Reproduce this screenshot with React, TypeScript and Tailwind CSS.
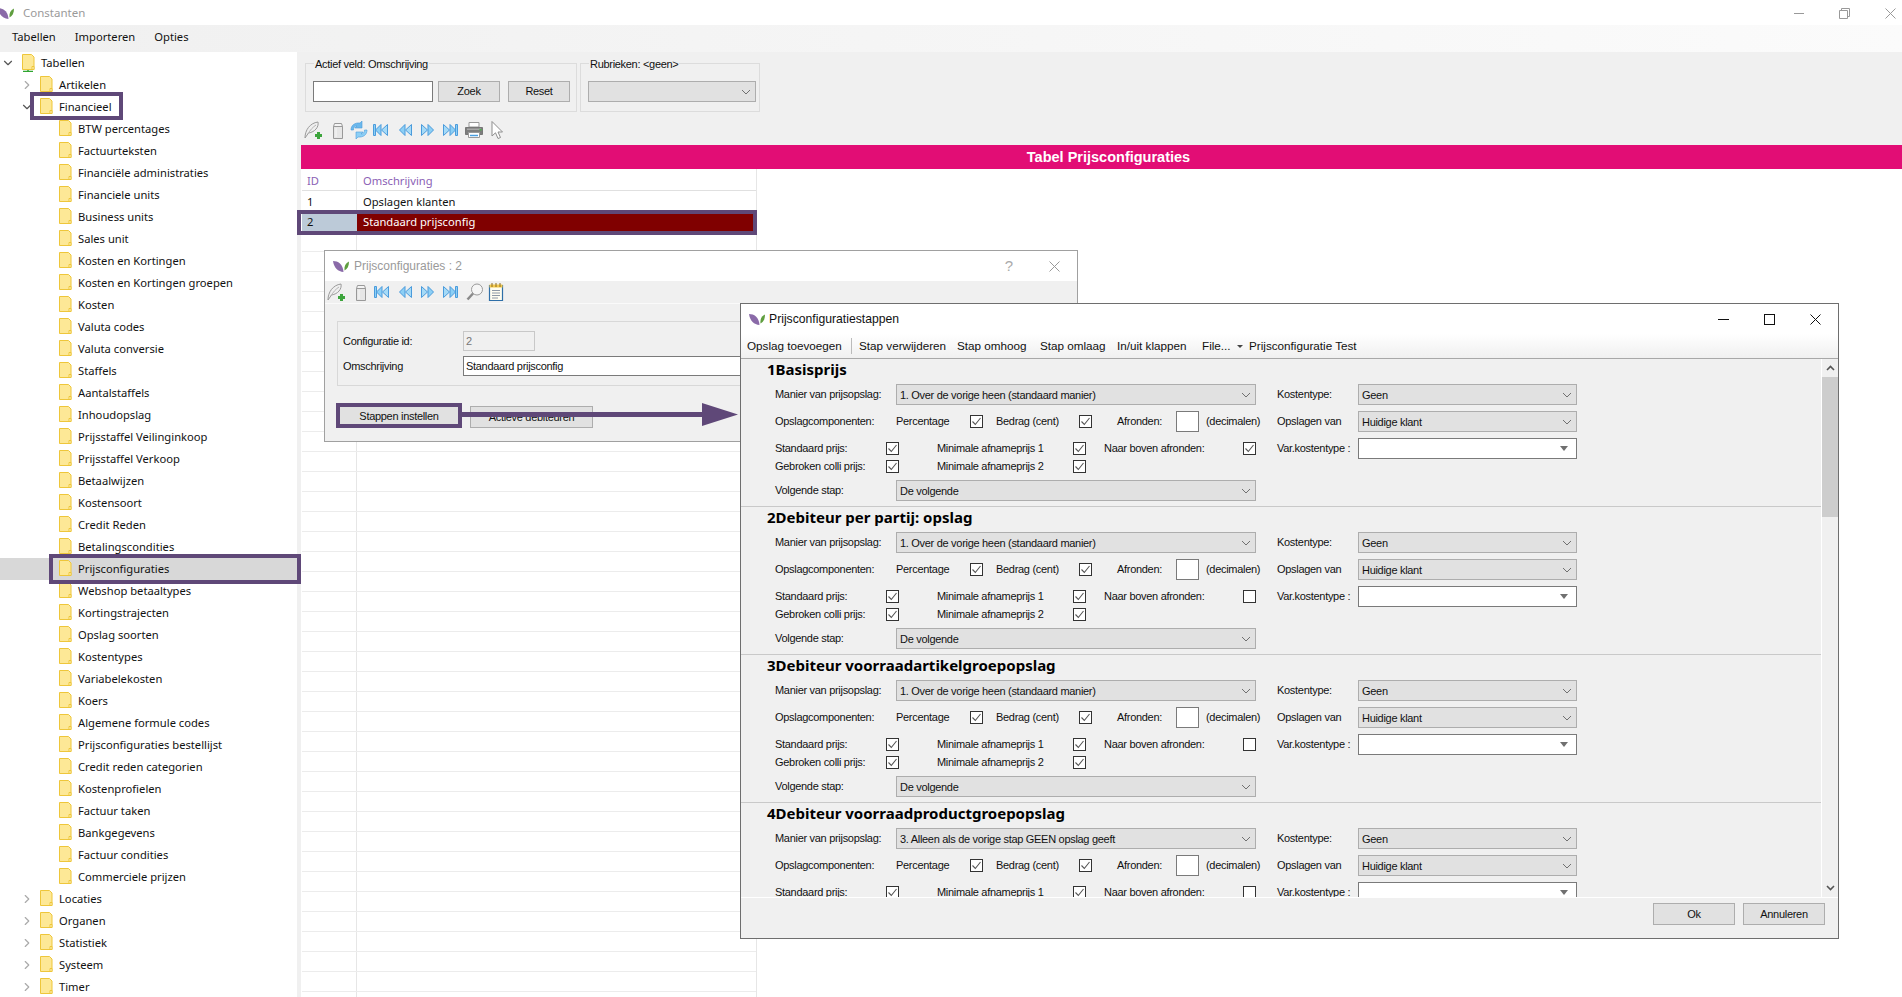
import { ChevronDown, ChevronRight } from "lucide-react";

const treeChildren = [
    "BTW percentages", "Factuurteksten", "Financiële administraties", "Financiele units", "Business units",
    "Sales unit", "Kosten en Kortingen", "Kosten en Kortingen groepen", "Kosten", "Valuta codes",
    "Valuta conversie", "Staffels", "Aantalstaffels", "Inhoudopslag", "Prijsstaffel Veilinginkoop",
    "Prijsstaffel Verkoop", "Betaalwijzen", "Kostensoort", "Credit Reden", "Betalingscondities",
    "Prijsconfiguraties", "Webshop betaaltypes", "Kortingstrajecten", "Opslag soorten", "Kostentypes",
    "Variabelekosten", "Koers", "Algemene formule codes", "Prijsconfiguraties bestellijst",
    "Credit reden categorien", "Kostenprofielen", "Factuur taken", "Bankgegevens", "Factuur condities",
    "Commerciele prijzen",
];

const steps = [
    { title: "1Basisprijs", mode: "1. Over de vorige heen (standaard manier)", up: true },
    { title: "2Debiteur per partij: opslag", mode: "1. Over de vorige heen (standaard manier)", up: false },
    { title: "3Debiteur voorraadartikelgroepopslag", mode: "1. Over de vorige heen (standaard manier)", up: false },
    { title: "4Debiteur voorraadproductgroepopslag", mode: "3. Alleen als de vorige stap GEEN opslag geeft", up: false },
];

const Logo = () => (
    <svg width="16" height="11" viewBox="0 0 16 11">
        <path d="M0 0C5 0 10 3 10.500 11C5 10.500 1 7 0 0Z" fill="#8a6aa8" />
        <path d="M11.500 9.500C11 5 12.500 2 16 0.500C16 5 14.500 8 11.500 9.500Z" fill="#5f9e3f" />
    </svg>
);

const Folder = ({ root }: { root?: boolean }) => (
    <svg width="13" height="18" viewBox="0 0 13 18" className="shrink-0">
        <path d="M0.500 0.500H9.500L12 3V15.500H0.500Z" fill="#fde896" stroke="#eec63a" />
        <path d="M10 12.500H12V15.500H10Z" fill="#fff4c0" stroke="#eec63a" />
        {root && <path d="M6 16V17M1 17.500H11" stroke="#2fa52f" strokeWidth="1.500" />}
    </svg>
);

const FeatherIcon = () => (
    <svg width="20" height="20" viewBox="0 0 20 20">
        <path d="M2 18C2 10 7 3 15 2C16 7 12 12 5.500 13L2 18Z" fill="#efefef" stroke="#9a9a9a" />
        <path d="M5 14C7 10 10 7 13 5" stroke="#b5b5b5" fill="none" />
        <path d="M12 15.500H19M15.500 12V19" stroke="#3da53d" strokeWidth="3" />
    </svg>
);

const TrashIcon = () => (
    <svg width="20" height="20" viewBox="0 0 20 20">
        <path d="M5.500 6.500H14.500V18.500H5.500Z" fill="#e6e6e6" stroke="#999" />
        <path d="M6.500 3.500H13.500L14.500 6.500H5.500Z" fill="#f4f4f4" stroke="#999" />
        <path d="M8 8V17" stroke="#f7f7f7" />
    </svg>
);

const RefreshIcon = () => (
    <svg width="20" height="20" viewBox="0 0 20 20">
        <path d="M2 10C2 5 6 2.500 11 3L13 1V8H6L8 6C5.500 6 4.500 8 4.500 10Z" fill="#6bb8ec" stroke="#4a9bdc" strokeWidth="0.600" />
        <path d="M18 10C18 15 14 17.500 9 17L7 19V12H14L12 14C14.500 14 15.500 12 15.500 10Z" fill="#8ccff5" stroke="#4a9bdc" strokeWidth="0.600" />
    </svg>
);

const NavIcon = ({ dir, bar }: { dir: "l" | "r"; bar?: boolean }) => (
    <svg width="20" height="20" viewBox="0 0 20 20" className={dir === "r" ? "-scale-x-100" : ""}>
        {bar && <path d="M2.500 4.500H4.500V15.500H2.500Z" fill="#8ccff5" stroke="#4a9bdc" />}
        <path d="M10 4.500V15.500L4.500 10Z" fill="#8ccff5" stroke="#4a9bdc" strokeLinejoin="round" />
        <path d="M16.500 4.500V15.500L10.500 10Z" fill="#a5daf7" stroke="#4a9bdc" strokeLinejoin="round" />
    </svg>
);

const PrinterIcon = () => (
    <svg width="20" height="20" viewBox="0 0 20 20">
        <path d="M5 2.500H15V7H5Z" fill="#fff" stroke="#999" />
        <path d="M1.500 7.500H18.500V14.500H1.500Z" fill="#7d7d7d" stroke="#777" />
        <path d="M3 8.500H17V10H3Z" fill="#a8a8a8" />
        <path d="M4.500 12.500H15.500V17.500H4.500Z" fill="#fff" stroke="#999" />
        <path d="M6 15.500H14" stroke="#4a9fe0" strokeWidth="1.500" />
        <path d="M15.500 9H17.500V10.500H15.500Z" fill="#49b649" />
    </svg>
);

const CursorIcon = () => (
    <svg width="20" height="20" viewBox="0 0 20 20">
        <path d="M5 1.500V16L8.500 12.800L11 18.500L13.500 17.500L11 12H15.500Z" fill="#fff" stroke="#8d8d8d" />
    </svg>
);

const LensIcon = () => (
    <svg width="20" height="20" viewBox="0 0 20 20">
        <circle cx="12" cy="7.500" r="5.500" fill="#f6f6f6" stroke="#9a9a9a" />
        <path d="M8 11.500L2.500 17.500" stroke="#8a8a8a" strokeWidth="2.500" />
    </svg>
);

const NoteIcon = () => (
    <svg width="20" height="20" viewBox="0 0 20 20">
        <path d="M3.500 3.500H16.500V18.500H3.500Z" fill="#fffdf0" stroke="#2f6fa8" strokeWidth="1.200" />
        <path d="M3.500 2.500H16.500V5.500H3.500Z" fill="#f3c94c" />
        <path d="M6 1V5M10 1V5M14 1V5" stroke="#8a6a20" />
        <path d="M6 8.500H14M6 11H14M6 13.500H14M6 16H12" stroke="#8d98a5" />
    </svg>
);

const SmallChevron = () => (
    <svg width="10" height="6" viewBox="0 0 10 6" className="shrink-0">
        <path d="M1 1L5 5L9 1" fill="none" stroke="#707070" />
    </svg>
);

const WinClose = ({ color = "#111" }: { color?: string }) => (
    <svg width="11" height="11" viewBox="0 0 11 11">
        <path d="M0.500 0.500L10.500 10.500M10.500 0.500L0.500 10.500" stroke={color} />
    </svg>
);

const Check = ({ on = true }: { on?: boolean }) => (
    <span className="flex h-[13px] w-[13px] shrink-0 items-center justify-center border border-[#333] bg-white">
        {on && (
            <svg width="11" height="11" viewBox="0 0 11 11">
                <path d="M1.500 5.500L4.300 8.500L9.500 2" fill="none" stroke="#555" strokeWidth="1.100" />
            </svg>
        )}
    </span>
);

const Select = ({ text, className }: { text: string; className: string }) => (
    <div className={`flex h-[21px] shrink-0 items-center justify-between border border-[#adadad] bg-[#e1e1e1] pl-[3px] pr-[4px] ${className}`}>
        <span className="pt-px">{text}</span>
        <SmallChevron />
    </div>
);

const Button = ({ text, className }: { text: string; className: string }) => (
    <div className={`flex items-center justify-center border border-[#adadad] bg-[#e1e1e1] text-[#111] ${className}`}>{text}</div>
);

const Step = ({ title, mode, up }: { title: string; mode: string; up: boolean }) => (
    <section className="h-[148px] shrink-0 whitespace-nowrap border-b border-[#c9c9c9] pl-[34px] text-[#111]">
        <h2 className="-ml-[8px] flex h-[21px] items-center font-['Noto_Sans',sans-serif] text-[15px] font-bold tracking-normal text-black">{title}</h2>
        <div className="mt-[4px] flex h-[21px] items-center">
            <span className="w-[121px] shrink-0">Manier van prijsopslag:</span>
            <Select text={mode} className="w-[360px]" />
            <span className="ml-[21px] w-[81px] shrink-0">Kostentype:</span>
            <Select text="Geen" className="w-[219px]" />
        </div>
        <div className="mt-[6px] flex h-[21px] items-center">
            <span className="w-[121px] shrink-0">Opslagcomponenten:</span>
            <span className="w-[74px] shrink-0">Percentage</span>
            <Check />
            <span className="ml-[13px] w-[83px] shrink-0">Bedrag (cent)</span>
            <Check />
            <span className="ml-[25px] w-[59px] shrink-0">Afronden:</span>
            <span className="h-[21px] w-[23px] shrink-0 border border-[#7a7a7a] bg-white" />
            <span className="ml-[7px] w-[71px] shrink-0">(decimalen)</span>
            <span className="w-[81px] shrink-0">Opslagen van</span>
            <Select text="Huidige klant" className="w-[219px]" />
        </div>
        <div className="mt-[7px] flex h-[18px] items-center">
            <span className="w-[111px] shrink-0">Standaard prijs:</span>
            <Check />
            <span className="ml-[38px] w-[136px] shrink-0">Minimale afnameprijs 1</span>
            <Check />
            <span className="ml-[18px] w-[139px] shrink-0">Naar boven afronden:</span>
            <Check on={up} />
            <span className="ml-[21px] w-[81px] shrink-0">Var.kostentype :</span>
            <div className="flex h-[21px] w-[219px] shrink-0 items-center justify-end border border-[#7a7a7a] bg-white pr-[8px]">
                <svg width="8" height="5" viewBox="0 0 8 5">
                    <path d="M0 0H8L4 5Z" fill="#707070" />
                </svg>
            </div>
        </div>
        <div className="flex h-[18px] items-center">
            <span className="w-[111px] shrink-0">Gebroken colli prijs:</span>
            <Check />
            <span className="ml-[38px] w-[136px] shrink-0">Minimale afnameprijs 2</span>
            <Check />
        </div>
        <div className="mt-[5px] flex h-[21px] items-center">
            <span className="w-[121px] shrink-0">Volgende stap:</span>
            <Select text="De volgende" className="w-[360px]" />
        </div>
    </section>
);

const TreeRow = ({ label, depth, open, selected, root }: { label: string; depth: 0 | 1 | 2; open?: boolean; selected?: boolean; root?: boolean }) => (
    <div className={`flex h-[22px] items-center ${selected ? "bg-[#d8d8d8]" : ""}`}>
        {depth === 0 && <ChevronDown size={14} strokeWidth={2} className="ml-[1px] mr-[7px] text-[#555]" />}
        {depth === 1 && (open ? (
            <ChevronDown size={14} strokeWidth={2} className="ml-[20px] mr-[6px] text-[#555]" />
        ) : (
            <ChevronRight size={14} strokeWidth={2} className="ml-[20px] mr-[6px] text-[#aaa]" />
        ))}
        {depth === 2 && <span className="w-[59px] shrink-0" />}
        <Folder root={root} />
        <span className="ml-[6px]">{label}</span>
    </div>
);

const App = () => {
    return (
        <div className="relative flex h-screen w-screen flex-col overflow-hidden bg-white font-['Noto_Sans',sans-serif] text-[11.2px] text-[#111]">
            <header className="flex h-[25px] shrink-0 items-center overflow-hidden pt-px">
                <div className="-ml-[2px]">
                    <Logo />
                </div>
                <span className="ml-[9px] text-[11.5px] text-[#9a9a9a]">Constanten</span>
                <div className="ml-auto flex items-center gap-[35px] pr-[6px] text-[#888]">
                    <span className="h-px w-[10px] bg-[#999]" />
                    <svg width="11" height="11" viewBox="0 0 11 11">
                        <path d="M0.500 2.500H8.500V10.500H0.500ZM2.500 2.500V0.500H10.500V8.500H8.500" fill="none" stroke="#999" />
                    </svg>
                    <WinClose color="#999" />
                </div>
            </header>
            <nav className="flex h-[27px] shrink-0 items-center gap-[19px] bg-gradient-to-r from-[#f0f0f0] to-[#fbfbfb] pb-[3px] pl-[12px]">
                <span>Tabellen</span>
                <span>Importeren</span>
                <span>Opties</span>
            </nav>
            <div className="flex min-h-0 flex-1">
                <aside className="w-[297px] shrink-0 overflow-hidden">
                    <TreeRow label="Tabellen" depth={0} root />
                    <TreeRow label="Artikelen" depth={1} />
                    <TreeRow label="Financieel" depth={1} open />
                    {treeChildren.map((c) => (
                        <TreeRow key={c} label={c} depth={2} selected={c === "Prijsconfiguraties"} />
                    ))}
                    {["Locaties", "Organen", "Statistiek", "Systeem", "Timer"].map((c) => (
                        <TreeRow key={c} label={c} depth={1} />
                    ))}
                </aside>
                <main className="flex min-w-0 flex-1 flex-col bg-[#f0f0f0] pl-[4px]">
                    <div className="ml-[4px] mt-[11px] flex gap-[3px] font-['Liberation_Sans',Arial,sans-serif] text-[11px] tracking-[-0.3px]">
                        <div className="relative flex h-[49px] w-[272px] gap-[5px] border border-[#dcdcdc] pl-[7px] pt-[17px]">
                            <span className="absolute -top-[8px] left-[8px] bg-[#f0f0f0] px-px">Actief veld: Omschrijving</span>
                            <span className="h-[21px] w-[120px] border border-[#7a7a7a] bg-white" />
                            <Button text="Zoek" className="h-[21px] w-[62px]" />
                            <Button text="Reset" className="ml-[3px] h-[21px] w-[62px]" />
                        </div>
                        <div className="relative flex h-[49px] w-[180px] border border-[#dcdcdc] pl-[7px] pt-[17px]">
                            <span className="absolute -top-[8px] left-[8px] bg-[#f0f0f0] px-px">Rubrieken: &lt;geen&gt;</span>
                            <Select text="" className="w-[168px]" />
                        </div>
                    </div>
                    <div className="flex h-[33px] items-center pl-[2px] pt-[2px]">
                        <span className="flex w-[20px] justify-center"><FeatherIcon /></span>
                        <span className="ml-[5px] flex w-[20px] justify-center"><TrashIcon /></span>
                        <span className="ml-px flex w-[20px] justify-center"><RefreshIcon /></span>
                        <span className="ml-[2px] flex w-[20px] justify-center"><NavIcon dir="l" bar /></span>
                        <span className="ml-[4px] flex w-[20px] justify-center"><NavIcon dir="l" /></span>
                        <span className="ml-[3px] flex w-[20px] justify-center"><NavIcon dir="r" /></span>
                        <span className="ml-[2px] flex w-[20px] justify-center"><NavIcon dir="r" bar /></span>
                        <span className="ml-[4px] flex w-[20px] justify-center"><PrinterIcon /></span>
                        <span className="ml-[3px] flex w-[20px] justify-center"><CursorIcon /></span>
                    </div>
                    <div className="flex h-[24px] shrink-0 items-center justify-center bg-[#e20d75] pl-[14px] pt-px font-['Liberation_Sans',Arial,sans-serif] text-[14.500px] font-bold text-white">
                        Tabel Prijsconfiguraties
                    </div>
                    <div className="min-h-0 flex-1 overflow-hidden bg-white pl-px">
                        <div className="w-[455px] border-r border-[#e6e6e6]">
                            <div className="flex h-[22px] border-b border-[#e0e0e0] text-[#8b5fb5]">
                                <span className="h-full w-[55px] border-r border-[#e6e6e6] pl-[5px] leading-[23px]">ID</span>
                                <span className="pl-[6px] leading-[23px]">Omschrijving</span>
                            </div>
                            <div className="flex h-[21px] border-b border-[#ececec]">
                                <span className="h-full w-[55px] border-r border-[#e6e6e6] pl-[5px] leading-[22px]">1</span>
                                <span className="pl-[6px] leading-[22px]">Opslagen klanten</span>
                            </div>
                            <div className="flex h-[20px] items-center">
                                <span className="h-full w-[55px] bg-[#bccad8] pl-[5px] leading-[20px]">2</span>
                                <span className="h-full flex-1 bg-[#800000] pl-[6px] leading-[20px] text-white">Standaard prijsconfig</span>
                            </div>
                            {Array.from({ length: 40 }).map((_, i) => (
                                <div key={i} className="flex h-[20px] border-b border-[#ececec]">
                                    <span className="h-full w-[55px] border-r border-[#e6e6e6]" />
                                </div>
                            ))}
                        </div>
                    </div>
                </main>
            </div>

            {/* venster 1 */}
            <div className="absolute left-[324px] top-[250px] flex h-[192px] w-[754px] flex-col border border-[#a0a0a0] bg-[#f0f0f0] font-['Liberation_Sans',Arial,sans-serif] text-[11px] tracking-[-0.3px]">
                <div className="flex h-[30px] shrink-0 items-center bg-white pl-[8px] text-[12px] tracking-normal">
                    <Logo />
                    <span className="ml-[5px] text-[#9a9a9a]">Prijsconfiguraties : 2</span>
                    <span className="ml-auto mr-[36px] text-[15px] text-[#aaa]">?</span>
                    <span className="mr-[17px] flex"><WinClose color="#999" /></span>
                </div>
                <div className="flex h-[23px] shrink-0 items-center border-b border-[#fafafa] pl-[1px]">
                    <span className="flex w-[20px] justify-center"><FeatherIcon /></span>
                    <span className="ml-[5px] flex w-[20px] justify-center"><TrashIcon /></span>
                    <span className="ml-px flex w-[20px] justify-center"><NavIcon dir="l" bar /></span>
                    <span className="ml-[3px] flex w-[20px] justify-center"><NavIcon dir="l" /></span>
                    <span className="ml-[3px] flex w-[20px] justify-center"><NavIcon dir="r" /></span>
                    <span className="ml-[2px] flex w-[20px] justify-center"><NavIcon dir="r" bar /></span>
                    <span className="ml-[5px] flex w-[20px] justify-center"><LensIcon /></span>
                    <span className="ml-px flex w-[20px] justify-center"><NoteIcon /></span>
                </div>
                <div className="ml-[12px] mr-[16px] mt-[17px] h-[65px] border border-[#d8d8d8] pl-[5px] pt-[9px]">
                    <div className="flex h-[20px] items-center">
                        <span className="w-[120px] shrink-0">Configuratie id:</span>
                        <span className="h-[20px] w-[72px] border border-[#c8c8c8] pl-[2px] leading-[18px] text-[#777]">2</span>
                    </div>
                    <div className="mt-[5px] flex h-[20px] items-center">
                        <span className="w-[120px] shrink-0">Omschrijving</span>
                        <span className="mr-[8px] h-[20px] flex-1 border border-[#7a7a7a] bg-white pl-[2px] leading-[18px]">Standaard prijsconfig</span>
                    </div>
                </div>
                <div className="ml-[14px] mt-[20px] flex gap-[11px]">
                    <Button text="Stappen instellen" className="h-[20px] w-[120px]" />
                    <Button text="Actieve debiteuren" className="h-[22px] w-[123px]" />
                </div>
            </div>

            {/* venster 2 */}
            <div className="absolute left-[740px] top-[303px] flex h-[636px] w-[1099px] flex-col border border-[#6e6e6e] bg-[#f0f0f0] font-['Liberation_Sans',Arial,sans-serif] text-[11px] tracking-[-0.3px]">
                <div className="flex h-[30px] shrink-0 items-center bg-white pl-[8px] text-[12.200px] tracking-normal text-[#111]">
                    <Logo />
                    <span className="ml-[4px]">Prijsconfiguratiestappen</span>
                    <span className="ml-auto h-px w-[11px] bg-[#111]" />
                    <span className="ml-[35px] h-[11px] w-[11px] border border-[#111]" />
                    <span className="ml-[35px] mr-[17px] flex"><WinClose /></span>
                </div>
                <div className="flex h-[25px] shrink-0 items-center whitespace-nowrap border-b border-[#a8a8a8] bg-gradient-to-b from-white to-[#f0f0f0] pl-[6px] text-[11.700px] tracking-normal">
                    <span className="w-[104px] shrink-0">Opslag toevoegen</span>
                    <span className="h-[16px] w-px shrink-0 bg-[#bbb]" />
                    <span className="ml-[7px] w-[98px] shrink-0">Stap verwijderen</span>
                    <span className="w-[83px] shrink-0">Stap omhoog</span>
                    <span className="w-[77px] shrink-0">Stap omlaag</span>
                    <span className="w-[85px] shrink-0">In/uit klappen</span>
                    <span className="w-[35px] shrink-0">File...</span>
                    <svg width="6" height="3" viewBox="0 0 6 3" className="shrink-0">
                        <path d="M0 0H6L3 3Z" fill="#444" />
                    </svg>
                    <span className="ml-[6px] shrink-0">Prijsconfiguratie Test</span>
                </div>
                <div className="flex min-h-0 flex-1 border-b border-white">
                    <div className="min-w-0 flex-1 overflow-hidden border-r border-white">
                        {steps.map((s) => (
                            <Step key={s.title} title={s.title} mode={s.mode} up={s.up} />
                        ))}
                    </div>
                    <div className="flex w-[16px] shrink-0 flex-col items-center">
                        <div className="flex h-[18px] items-center justify-center">
                            <svg width="9" height="6" viewBox="0 0 9 6">
                                <path d="M1 5L4.500 1.500L8 5" fill="none" stroke="#555" strokeWidth="1.600" />
                            </svg>
                        </div>
                        <div className="h-[140px] w-full bg-[#cdcdcd]" />
                        <div className="mt-auto flex h-[18px] items-center justify-center">
                            <svg width="9" height="6" viewBox="0 0 9 6">
                                <path d="M1 1L4.500 4.500L8 1" fill="none" stroke="#555" strokeWidth="1.600" />
                            </svg>
                        </div>
                    </div>
                </div>
                <div className="flex h-[40px] shrink-0 justify-end gap-[8px] pr-[13px] pt-[5px]">
                    <Button text="Ok" className="h-[22px] w-[82px]" />
                    <Button text="Annuleren" className="h-[22px] w-[82px]" />
                </div>
            </div>

            {/* markeringen */}
            <div className="absolute left-[30px] top-[92px] h-[28px] w-[93px] border-[4px] border-[#5f4878]" />
            <div className="absolute left-[49px] top-[554px] h-[30px] w-[252px] border-[4px] border-[#5f4878]" />
            <div className="absolute left-[297px] top-[210px] h-[25px] w-[460px] border-[4px] border-[#5f4878]" />
            <div className="absolute left-[336px] top-[403px] h-[25px] w-[126px] border-[4px] border-[#5f4878]" />
            <svg width="280" height="26" viewBox="0 0 280 26" className="absolute left-[460px] top-[402px]">
                <path d="M0 10H242V1L278 12.500L242 24V15H0Z" fill="#5f4878" />
            </svg>
        </div>
    );
};

export default App;
